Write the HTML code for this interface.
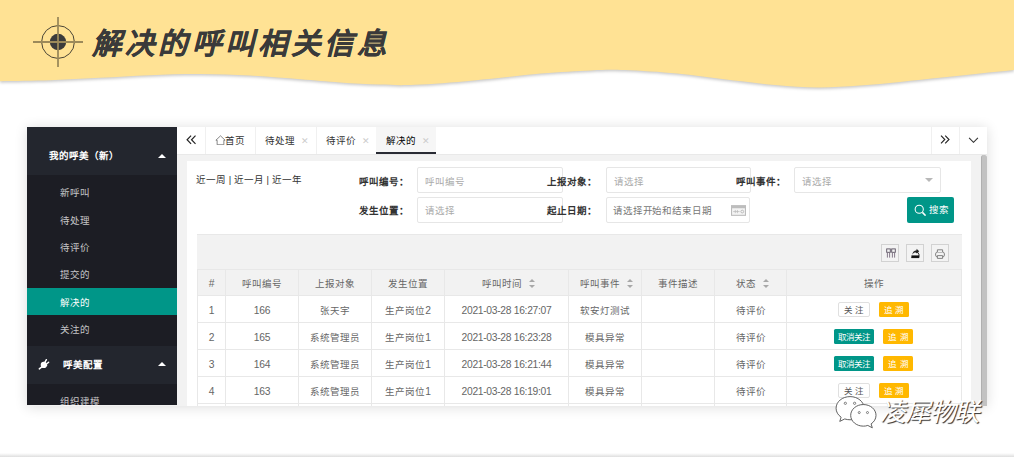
<!DOCTYPE html>
<html lang="zh-CN">
<head>
<meta charset="utf-8">
<title>解决的呼叫相关信息</title>
<style>
*{box-sizing:border-box;margin:0;padding:0}
html,body{width:1014px;height:457px;overflow:hidden;background:#fff}
body{position:relative;font-family:"Liberation Sans",sans-serif;font-size:9.5px;color:#666}
.abs{position:absolute}
#wave{position:absolute;left:0;top:0;width:1014px;height:110px}
#title{position:absolute;left:92.300px;top:23.500px;height:40px;line-height:40px;font-size:29.500px;font-weight:bold;font-style:italic;letter-spacing:3.100px;color:#3a3a3a;-webkit-text-stroke:.15px #3a3a3a;white-space:nowrap}
#shot{position:absolute;left:27px;top:127px;width:960px;height:278.600px;background:#f2f2f2;overflow:hidden;box-shadow:0 1px 12px rgba(0,0,0,.14)}
#side{position:absolute;left:0;top:0;width:150px;height:278px;background:#1c1d24;color:rgba(255,255,255,.75)}
.sh{position:absolute;left:0;width:150px;background:#23262e;color:#fff;font-weight:bold}
.si{position:absolute;left:0;width:150px;height:27.400px;line-height:29.400px;padding-left:33px;white-space:nowrap}
.si.on{background:#009688;color:#fff}
.tri{position:absolute;width:0;height:0;border-left:4.5px solid transparent;border-right:4.5px solid transparent;border-bottom:4.5px solid #fff}
#tabs{position:absolute;left:150px;top:0;width:810px;height:27.600px;background:#fff;border-bottom:1px solid #e9e9e9}
.tb{position:absolute;top:0;height:27px;line-height:27px;color:#333;white-space:nowrap;text-align:center}
.vl{position:absolute;top:0;width:1px;height:27px;background:#f0f0f0}
.x{color:#ccc;font-size:8.500px;margin-left:6px}
#panel{position:absolute;left:160px;top:34px;width:784px;height:260px;background:#fff}
.lb{position:absolute;font-weight:bold;color:#333;white-space:nowrap;height:26px;line-height:27.500px;z-index:3}
.ip{position:absolute;height:26px;line-height:25.500px;border:1px solid #e6e6e6;border-radius:2px;background:#fff;color:#aaa;padding-left:7px;white-space:nowrap}
#tbl{position:absolute;left:10px;top:73px;width:765px;height:200px;background:#fff}
.hl{position:absolute;left:0;width:765px;height:1px;background:#e8e8e8}
.cvl{position:absolute;top:35px;width:1px;height:170px;background:#e8e8e8}
.c{position:absolute;text-align:center;white-space:nowrap;color:#666;padding-top:1.500px}
.c.h{padding-top:.700px}
.n{font-size:10.300px;letter-spacing:-.3px}
.r1{padding-top:1px}
.btn{position:absolute;height:15px;line-height:16.600px;border-radius:1.5px;text-align:center;font-size:8.5px;white-space:nowrap;color:#fff}
.so{display:inline-block;position:relative;width:7px;height:8.600px;margin-left:7px;vertical-align:-1.300px}
.so:before,.so:after{content:"";position:absolute;left:0;width:0;height:0;border-left:3.500px solid transparent;border-right:3.500px solid transparent}
.so:before{top:0;border-bottom:3.800px solid #a8a8a8}
.so:after{bottom:0;border-top:3.800px solid #a8a8a8}
.b1{background:#fff;border:1px solid #e0e0e0;color:#555;line-height:14.600px;border-radius:2px}
.b2{background:#009688;letter-spacing:-.700px;padding-left:.700px}
.b3{background:#ffb800}
.tool{position:absolute;top:10px;width:18px;height:18px;border:1px solid #d2d2d2;background:#f3f3f3}
</style>
</head>
<body>
<svg id="wave" viewBox="0 0 1014 110">
<defs><filter id="ws" x="-5%" y="-20%" width="110%" height="160%"><feGaussianBlur stdDeviation="1.6"/></filter></defs>
<path fill="rgba(0,0,0,.22)" filter="url(#ws)" transform="translate(0,1.5)" d="M0 81.2C15.0 80.9 33.3 80.9 50 80.3C66.7 79.7 83.3 78.6 100 77.8C116.7 77.0 133.2 75.8 150 75.2C166.8 74.6 184.3 74.0 201 74.1C217.7 74.2 233.5 74.8 250 75.6C266.5 76.4 285.0 78.1 300 79.2C315.0 80.3 326.7 81.5 340 82.4C353.3 83.3 367.5 84.2 380 84.6C392.5 85.0 399.3 85.5 415 84.8C430.7 84.1 453.0 82.3 474 80.4C495.0 78.5 521.5 75.3 541 73.6C560.5 71.9 577.0 71.0 591 70.4C605.0 69.8 610.7 69.6 625 70.1C639.3 70.6 660.5 72.1 677 73.6C693.5 75.1 707.7 77.4 724 79.3C740.3 81.2 759.3 83.6 775 85C790.7 86.4 803.8 87.4 818 87.5C832.2 87.6 846.3 86.5 860 85.6C873.7 84.7 886.3 83.3 900 82C913.7 80.7 928.7 79.0 942 77.6C955.3 76.2 968.0 74.8 980 73.6C992.0 72.3 1001.7 71.4 1014 70.1L1014 -5L0 -5Z"/>
<path fill="#ffe294" d="M0 81.2C15.0 80.9 33.3 80.9 50 80.3C66.7 79.7 83.3 78.6 100 77.8C116.7 77.0 133.2 75.8 150 75.2C166.8 74.6 184.3 74.0 201 74.1C217.7 74.2 233.5 74.8 250 75.6C266.5 76.4 285.0 78.1 300 79.2C315.0 80.3 326.7 81.5 340 82.4C353.3 83.3 367.5 84.2 380 84.6C392.5 85.0 399.3 85.5 415 84.8C430.7 84.1 453.0 82.3 474 80.4C495.0 78.5 521.5 75.3 541 73.6C560.5 71.9 577.0 71.0 591 70.4C605.0 69.8 610.7 69.6 625 70.1C639.3 70.6 660.5 72.1 677 73.6C693.5 75.1 707.7 77.4 724 79.3C740.3 81.2 759.3 83.6 775 85C790.7 86.4 803.8 87.4 818 87.5C832.2 87.6 846.3 86.5 860 85.6C873.7 84.7 886.3 83.3 900 82C913.7 80.7 928.7 79.0 942 77.6C955.3 76.2 968.0 74.8 980 73.6C992.0 72.3 1001.7 71.4 1014 70.1L1014 -5L0 -5Z"/>
</svg>
<svg class="abs" style="left:30px;top:14px" width="56" height="56" viewBox="0 0 56 56">
<circle cx="28" cy="28" r="16.4" fill="none" stroke="#4a4536" stroke-width="1"/>
<circle cx="28" cy="28" r="8.2" fill="#3b3b3b"/>
<path d="M3 28H53M28 3V53" stroke="#9c8a5a" stroke-width="1.8"/>
</svg>
<div id="title">解决的呼叫相关信息</div>

<div id="shot">
 <div id="side">
  <div class="sh" style="top:0;height:47.5px"><span class="abs" style="left:22px;top:18px;height:22px;line-height:22px;white-space:nowrap">我的呼美（新）</span><i class="tri" style="left:131px;top:26.5px"></i></div>
  <div class="si" style="top:51.100px">新呼叫</div>
  <div class="si" style="top:78.500px">待处理</div>
  <div class="si" style="top:105.900px">待评价</div>
  <div class="si" style="top:133.300px">提交的</div>
  <div class="si on" style="top:160.700px">解决的</div>
  <div class="si" style="top:188.100px">关注的</div>
  <div class="sh" style="top:218.5px;height:38.2px"><span class="abs" style="left:35.5px;top:8px;height:22px;line-height:22px;white-space:nowrap">呼美配置</span><i class="tri" style="left:131px;top:16.5px"></i>
   <svg class="abs" style="left:11px;top:12.5px" width="12" height="13" viewBox="0 0 12 13"><circle cx="5.800" cy="6.900" r="3.100" fill="#fff"/><path d="M6.700 4.600L8.400 1.700M8.300 6.300L10.600 4.300" stroke="#fff" stroke-width="1.500" stroke-linecap="round" fill="none"/><path d="M4.200 8.600L1.300 10.900" stroke="#fff" stroke-width="1.500" stroke-linecap="round"/><path d="M5 4.200L9 8" stroke="#fff" stroke-width="1.200"/></svg>
  </div>
  <div class="si" style="top:260px">组织建模</div>
 </div>

 <div id="tabs">
  <div class="tb" style="left:0;width:28px"><svg style="vertical-align:-.5px" width="10.600" height="9.500" viewBox="0 0 10 9"><path d="M4.8 0.6L1 4.5 4.8 8.4M9 0.6L5.2 4.5 9 8.4" fill="none" stroke="#222" stroke-width="1.1"/></svg></div>
  <div class="vl" style="left:27.5px"></div>
  <div class="tb" style="left:28px;width:50px"><svg style="vertical-align:-1px;margin-right:-.5px" width="11" height="10.500" viewBox="0 0 10 10"><path d="M0.6 5L5 0.8 9.4 5H8.2V9.3H1.8V5z" fill="none" stroke="#666" stroke-width=".75"/></svg>首页</div>
  <div class="vl" style="left:78px"></div>
  <div class="tb" style="left:79.500px;width:60px">待处理<span class="x">✕</span></div>
  <div class="vl" style="left:138.5px"></div>
  <div class="tb" style="left:140.500px;width:60px">待评价<span class="x">✕</span></div>
  <div class="tb" style="left:199.3px;width:60.2px;background:#f6f6f6;color:#000;border-bottom:2px solid #292b34;padding-left:3px">解决的<span class="x">✕</span></div>
  <div class="vl" style="left:753.500px"></div>
  <div class="tb" style="left:754px;width:28px"><svg style="vertical-align:-.2px" width="10" height="9" viewBox="0 0 10 9"><path d="M1 0.6L4.8 4.5 1 8.4M5.2 0.6L9 4.5 5.2 8.4" fill="none" stroke="#222" stroke-width="1.1"/></svg></div>
  <div class="vl" style="left:781.500px"></div>
  <div class="tb" style="left:782px;width:28px"><svg style="vertical-align:.8px" width="11" height="6.600" viewBox="0 0 10 6"><path d="M1 0.8L5 4.8 9 0.8" fill="none" stroke="#333" stroke-width="1"/></svg></div>
 </div>

 <div id="panel">
  <div class="abs" style="left:9.200px;top:6.200px;height:26px;line-height:26px;color:#333;white-space:nowrap">近一周 | 近一月 | 近一年</div>
  <div class="ip r1" style="left:230px;top:6.200px;width:146px">呼叫编号</div>
  <div class="ip" style="left:230px;top:36px;width:146px">请选择</div>
  <div class="ip r1" style="left:418.5px;top:6.200px;width:145px">请选择</div>
  <div class="ip" style="left:419px;top:36px;width:144px;color:#777;letter-spacing:-.150px;padding-left:6px">请选择开始和结束日期
   <svg class="abs" style="right:3.500px;top:6.500px" width="15" height="11" viewBox="0 0 14 10"><rect x=".5" y=".5" width="13" height="9" fill="#f4f4f4" stroke="#bbb"/><rect x=".5" y=".5" width="13" height="2.4" fill="#bdbdbd"/><path d="M2 6h6M4 4.5v3M6 4.5v3" stroke="#bbb" stroke-width=".7"/><circle cx="10.5" cy="6" r="1.3" fill="none" stroke="#aaa" stroke-width=".7"/></svg></div>
  <div class="ip r1" style="left:607.3px;top:6.200px;width:146.5px">请选择<i class="abs" style="right:6.800px;top:10.200px;width:0;height:0;border-left:4px solid transparent;border-right:4px solid transparent;border-top:4px solid #b8b8b8"></i></div>
  <div class="lb r1" style="left:172px;top:6.200px">呼叫编号：</div>
  <div class="lb" style="left:172px;top:36px">发生位置：</div>
  <div class="lb r1" style="left:360px;top:6.200px">上报对象：</div>
  <div class="lb" style="left:360px;top:36px">起止日期：</div>
  <div class="lb r1" style="left:549px;top:6.200px">呼叫事件：</div>
  <div class="abs" style="left:720px;top:36px;width:47px;height:26px;line-height:26px;background:#009688;border-radius:2px;color:#fff;white-space:nowrap;padding-left:6.500px"><svg style="vertical-align:-3px;margin-right:2.500px" width="12.500" height="12.500" viewBox="0 0 11 11"><circle cx="4.6" cy="4.6" r="3.6" fill="none" stroke="#fff" stroke-width=".9"/><path d="M7.4 7.4L10.2 10.2" stroke="#fff" stroke-width="1.4"/></svg>搜索</div>

  <div id="tbl">
   <div class="abs" style="left:0;top:0;width:765px;height:61px;background:#f2f2f2"></div>
   <div class="tool" style="left:684px"><svg width="16" height="16" viewBox="0 0 16 16"><rect x="4.700" y="3.900" width="3.600" height="3.400" fill="none" stroke="#5a5060" stroke-width=".9"/><rect x="9.700" y="3.900" width="3.600" height="3.400" fill="none" stroke="#5a5060" stroke-width=".9"/><path d="M5.400 8v4.600M7.600 8v4.600M10.400 8v4.600M12.600 8v4.600" stroke="#6a5a70" stroke-width=".8"/></svg></div>
   <div class="tool" style="left:709px"><svg width="16" height="16" viewBox="0 0 16 16"><path d="M4.4 12.6h7.6v-3l-1.2-2.2H8.6" fill="none" stroke="#222" stroke-width="1"/><rect x="4.4" y="10.4" width="7.6" height="2.4" fill="#111"/><path d="M5.2 9.8C5.6 7 7.2 5.4 9.6 5.2V3.8l2.6 2.4-2.6 2.4V7c-1.8 0-3.200.8-4.400 2.800z" fill="#222"/></svg></div>
   <div class="tool" style="left:733.5px"><svg style="position:relative;top:.5px" width="16" height="16" viewBox="0 0 16 16"><rect x="3.6" y="6" width="8.800" height="5" rx="2" fill="none" stroke="#777" stroke-width=".9"/><path d="M5.400 6V3.800h5.200V6M5.400 9.600h5.200v2.800H5.400z" fill="#f2f2f2" stroke="#777" stroke-width=".9"/></svg></div>
   <div class="hl" style="top:0px"></div>
   <div class="hl" style="top:35px"></div>
   <div class="hl" style="top:61px"></div>
   <div class="hl" style="top:88px"></div>
   <div class="hl" style="top:115px"></div>
   <div class="hl" style="top:142px"></div>
   <div class="hl" style="top:169px"></div>
   <div class="cvl" style="left:0px"></div>
   <div class="cvl" style="left:28px"></div>
   <div class="cvl" style="left:101px"></div>
   <div class="cvl" style="left:174px"></div>
   <div class="cvl" style="left:247px"></div>
   <div class="cvl" style="left:371px"></div>
   <div class="cvl" style="left:444px"></div>
   <div class="cvl" style="left:517px"></div>
   <div class="cvl" style="left:589px"></div>
   <div class="cvl" style="left:764px"></div>
   <div class="c h n" style="left:1px;top:36px;width:27px;height:25px;line-height:25px">#</div>
   <div class="c h" style="left:29px;top:36px;width:72px;height:25px;line-height:25px">呼叫编号</div>
   <div class="c h" style="left:102px;top:36px;width:72px;height:25px;line-height:25px">上报对象</div>
   <div class="c h" style="left:175px;top:36px;width:72px;height:25px;line-height:25px">发生位置</div>
   <div class="c h" style="left:248px;top:36px;width:123px;height:25px;line-height:25px;padding-left:4px">呼叫时间<i class="so"></i></div>
   <div class="c h" style="left:372px;top:36px;width:72px;height:25px;line-height:25px;padding-left:4px">呼叫事件<i class="so"></i></div>
   <div class="c h" style="left:445px;top:36px;width:72px;height:25px;line-height:25px">事件描述</div>
   <div class="c h" style="left:518px;top:36px;width:71px;height:25px;line-height:25px;padding-left:4px">状态<i class="so"></i></div>
   <div class="c h" style="left:590px;top:36px;width:174px;height:25px;line-height:25px">操作</div>
   <div class="c n" style="left:1px;top:62px;width:27px;height:26px;line-height:26px">1</div>
   <div class="c n" style="left:29px;top:62px;width:72px;height:26px;line-height:26px">166</div>
   <div class="c" style="left:102px;top:62px;width:72px;height:26px;line-height:26px">张天宇</div>
   <div class="c" style="left:175px;top:62px;width:72px;height:26px;line-height:26px">生产岗位<span class="n">2</span></div>
   <div class="c n" style="left:248px;top:62px;width:123px;height:26px;line-height:26px">2021-03-28 16:27:07</div>
   <div class="c" style="left:372px;top:62px;width:72px;height:26px;line-height:26px">软安灯测试</div>
   <div class="c" style="left:518px;top:62px;width:71px;height:26px;line-height:26px">待评价</div>
   <div class="c n" style="left:1px;top:89px;width:27px;height:26px;line-height:26px">2</div>
   <div class="c n" style="left:29px;top:89px;width:72px;height:26px;line-height:26px">165</div>
   <div class="c" style="left:102px;top:89px;width:72px;height:26px;line-height:26px">系统管理员</div>
   <div class="c" style="left:175px;top:89px;width:72px;height:26px;line-height:26px">生产岗位<span class="n">1</span></div>
   <div class="c n" style="left:248px;top:89px;width:123px;height:26px;line-height:26px">2021-03-28 16:23:28</div>
   <div class="c" style="left:372px;top:89px;width:72px;height:26px;line-height:26px">模具异常</div>
   <div class="c" style="left:518px;top:89px;width:71px;height:26px;line-height:26px">待评价</div>
   <div class="c n" style="left:1px;top:116px;width:27px;height:26px;line-height:26px">3</div>
   <div class="c n" style="left:29px;top:116px;width:72px;height:26px;line-height:26px">164</div>
   <div class="c" style="left:102px;top:116px;width:72px;height:26px;line-height:26px">系统管理员</div>
   <div class="c" style="left:175px;top:116px;width:72px;height:26px;line-height:26px">生产岗位<span class="n">1</span></div>
   <div class="c n" style="left:248px;top:116px;width:123px;height:26px;line-height:26px">2021-03-28 16:21:44</div>
   <div class="c" style="left:372px;top:116px;width:72px;height:26px;line-height:26px">模具异常</div>
   <div class="c" style="left:518px;top:116px;width:71px;height:26px;line-height:26px">待评价</div>
   <div class="c n" style="left:1px;top:143px;width:27px;height:26px;line-height:26px">4</div>
   <div class="c n" style="left:29px;top:143px;width:72px;height:26px;line-height:26px">163</div>
   <div class="c" style="left:102px;top:143px;width:72px;height:26px;line-height:26px">系统管理员</div>
   <div class="c" style="left:175px;top:143px;width:72px;height:26px;line-height:26px">生产岗位<span class="n">1</span></div>
   <div class="c n" style="left:248px;top:143px;width:123px;height:26px;line-height:26px">2021-03-28 16:19:01</div>
   <div class="c" style="left:372px;top:143px;width:72px;height:26px;line-height:26px">模具异常</div>
   <div class="c" style="left:518px;top:143px;width:71px;height:26px;line-height:26px">待评价</div>
   <div class="btn b1" style="left:641.3px;top:68.3px;width:31.5px">关 注</div>
   <div class="btn b3" style="left:682.2px;top:68.3px;width:30.2px">追 溯</div>
   <div class="btn b2" style="left:636.8px;top:95.1px;width:40.0px">取消关注</div>
   <div class="btn b3" style="left:686.4px;top:95.1px;width:30.0px">追 溯</div>
   <div class="btn b2" style="left:636.8px;top:121.9px;width:40.0px">取消关注</div>
   <div class="btn b3" style="left:686.4px;top:121.9px;width:30.0px">追 溯</div>
   <div class="btn b1" style="left:641.3px;top:148.7px;width:31.5px">关 注</div>
   <div class="btn b3" style="left:682.2px;top:148.7px;width:30.2px">追 溯</div>
  </div>
 </div>
 <div class="abs" style="left:954.400px;top:27.5px;width:5.600px;height:251px;background:#c2c2c2;border-left:1px solid #b0b0b0;border-radius:2.5px 2.5px 0 0"></div>
</div>

<svg class="abs" style="left:833.500px;top:392.800px" width="47.400" height="41.200" viewBox="0 0 46 40">
<path d="M15.600 3.500C8 3.500 2 8.500 2 14.800c0 3.500 1.900 6.600 4.900 8.700L5.600 27.600l4.800-2.400c1.600.5 3.400.8 5.200.8 7.600 0 13.600-5 13.600-11.200S23.200 3.500 15.600 3.500z" fill="#fff" stroke="#555" stroke-width=".9"/>
<path d="M28.500 11.200c-6.800 0-12.300 4.700-12.300 10.500s5.500 10.500 12.300 10.500c1.500 0 3-.2 4.300-.7l4.400 2.300-1.200-3.800c2.900-1.900 4.800-4.900 4.800-8.300 0-5.800-5.500-10.500-12.300-10.500z" fill="#fff" stroke="#555" stroke-width=".9"/>
<circle cx="11" cy="10" r="1.100" fill="#fff" stroke="#555" stroke-width=".7"/><circle cx="20" cy="10" r="1.100" fill="#fff" stroke="#555" stroke-width=".7"/>
<circle cx="24.500" cy="19" r="1" fill="#fff" stroke="#555" stroke-width=".7"/><circle cx="32.500" cy="19" r="1" fill="#fff" stroke="#555" stroke-width=".7"/>
</svg>
<div class="abs" style="left:880px;top:395.500px;height:32px;line-height:32px;font-size:25.500px;letter-spacing:-1.200px;font-style:italic;color:#fff;white-space:nowrap;text-shadow:1px 1px .8px rgba(0,0,0,.8)">凌犀物联</div>
<div class="abs" style="left:0;top:452.500px;width:1014px;height:4.500px;background:linear-gradient(#fff,#f1f1f1 45%,#dedede)"></div>
</body>
</html>
